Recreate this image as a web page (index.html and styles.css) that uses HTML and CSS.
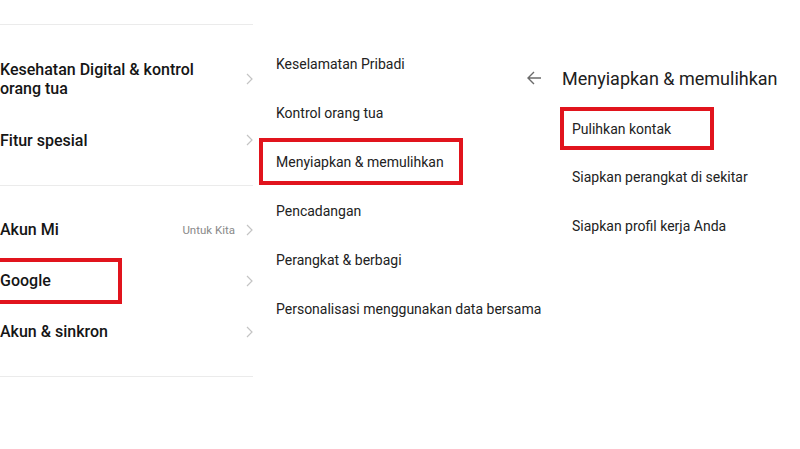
FILE: index.html
```html
<!DOCTYPE html>
<html lang="id">
<head>
<meta charset="utf-8">
<title>Pengaturan</title>
<link rel="stylesheet" href="styles.css">
</head>
<body>
<div class="page">
  <section class="panel left">
    <div class="divider"></div>
    <div class="group g1">
      <div class="lrow tall">
        <span class="label">Kesehatan Digital &amp; kontrol<br>orang tua</span>
        <svg class="chev" viewBox="0 0 7 12"><polyline points="1,1 6,6 1,11"/></svg>
      </div>
      <div class="lrow r2">
        <span class="label">Fitur spesial</span>
        <svg class="chev" viewBox="0 0 7 12"><polyline points="1,1 6,6 1,11"/></svg>
      </div>
    </div>
    <div class="divider"></div>
    <div class="group g2">
      <div class="lrow">
        <span class="label">Akun Mi</span>
        <span class="end"><span class="hint">Untuk Kita</span><svg class="chev" viewBox="0 0 7 12"><polyline points="1,1 6,6 1,11"/></svg></span>
      </div>
      <div class="lrow">
        <span class="label boxed-left">Google</span>
        <svg class="chev" viewBox="0 0 7 12"><polyline points="1,1 6,6 1,11"/></svg>
      </div>
      <div class="lrow">
        <span class="label">Akun &amp; sinkron</span>
        <svg class="chev" viewBox="0 0 7 12"><polyline points="1,1 6,6 1,11"/></svg>
      </div>
    </div>
    <div class="divider"></div>
  </section>

  <section class="panel middle">
    <div class="mrow">Keselamatan Pribadi</div>
    <div class="mrow">Kontrol orang tua</div>
    <div class="mrow marked">Menyiapkan &amp; memulihkan</div>
    <div class="mrow">Pencadangan</div>
    <div class="mrow">Perangkat &amp; berbagi</div>
    <div class="mrow">Personalisasi menggunakan data bersama</div>
  </section>

  <section class="panel right">
    <header class="rhead">
      <svg class="back" viewBox="0 0 16 16"><path d="M15 8H2M8 2L2 8l6 6"/></svg>
      <h1 class="title">Menyiapkan &amp; memulihkan</h1>
    </header>
    <div class="rlist">
      <div class="rrow marked">Pulihkan kontak</div>
      <div class="rrow">Siapkan perangkat di sekitar</div>
      <div class="rrow">Siapkan profil kerja Anda</div>
    </div>
  </section>
</div>
</body>
</html>
```

FILE: styles.css
```css
* { box-sizing: border-box; }
html, body { margin: 0; padding: 0; background: #fff; }
body {
  width: 800px;
  height: 449px;
  overflow: hidden;
  font-family: Roboto, "Liberation Sans", sans-serif;
  color: #1a1a1a;
}
.page { display: flex; align-items: flex-start; }

/* left panel */
.left { width: 255px; padding-top: 24px; }
.divider { height: 1px; background: #ebebeb; width: 253px; }
.group.g1 { padding: 19px 0 19px; }
.group.g2 { padding: 18px 0 19px; }
.lrow {
  display: flex;
  align-items: center;
  justify-content: space-between;
  height: 51px;
  padding-right: 2px;
}
.lrow.tall { height: 70px; }
.lrow.r2 { height: 52px; }
.label {
  font-size: 16px;
  font-weight: 500;
  line-height: 19px;
  color: #151515;
}
.end { display: flex; align-items: center; gap: 11px; }
.hint { font-size: 11.5px; color: #8a8a8a; font-weight: 400; }
.chev {
  width: 7px;
  height: 12px;
  fill: none;
  stroke: #c4c4c4;
  stroke-width: 1.2;
}
.boxed-left {
  display: flex;
  align-items: center;
  height: 46px;
  width: 132px;
  margin-left: -10px;
  padding-left: 6px;
  border: 4px solid #e1141d;
}

/* middle panel */
.middle { width: 260px; padding-top: 39px; }
.mrow {
  height: 49px;
  display: flex;
  align-items: center;
  padding-left: 21px;
  font-size: 14px;
  color: #222;
  white-space: nowrap;
}
.mrow.marked {
  height: 47px;
  margin: 1px 0 1px 4px;
  width: 204px;
  padding-left: 13px;
  border: 4px solid #e1141d;
}

/* right panel */
.right { width: 285px; padding-top: 64px; }
.rhead { display: flex; align-items: center; height: 28px; }
.back {
  width: 16px;
  height: 16px;
  margin-left: 11px;
  fill: none;
  stroke: #6b6b6b;
  stroke-width: 1.4;
}
.title {
  margin: 0 0 0 20px;
  font-size: 18px;
  font-weight: 400;
  color: #202020;
  white-space: nowrap;
}
.rlist { padding-top: 14px; }
.rrow {
  height: 49px;
  display: flex;
  align-items: center;
  padding-left: 57px;
  font-size: 14px;
  color: #222;
  white-space: nowrap;
}
.rrow.marked {
  height: 43px;
  margin: 1px 0 2px 45px;
  width: 154px;
  padding-left: 8px;
  border: 4px solid #e1141d;
}
```
